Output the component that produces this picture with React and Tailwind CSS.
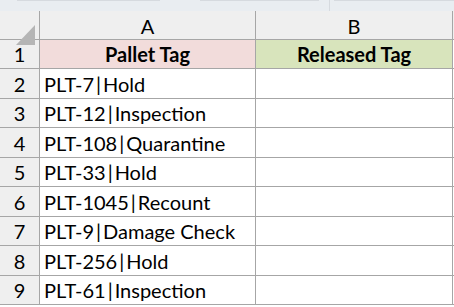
const rows = [
  "PLT-7|Hold",
  "PLT-12|Inspection",
  "PLT-108|Quarantine",
  "PLT-33|Hold",
  "PLT-1045|Recount",
  "PLT-9|Damage Check",
  "PLT-256|Hold",
  "PLT-61|Inspection",
];

const heights = ["h-[30px]", "h-[29px]", "h-[30px]", "h-[29px]", "h-[30px]", "h-[29px]", "h-[30px]", "h-[29px]"];

const Tag = ({ text }) => {
  const [id, status] = text.split("|");
  return (
    <span>
      {id}
      <span className="mx-[2px]">|</span>
      {status}
    </span>
  );
};

const App = () => {
  return (
    <div className="w-[454px] h-[307px] overflow-hidden bg-white text-black font-['Lato',sans-serif] text-[20px] leading-none">
      {/* top strip */}
      <div className="h-[11px] bg-[#e9edf1] flex items-start">
        <div className="w-[17px]" />
        <div className="w-[143px] border-t border-[#d6dadf]" />
        <div className="w-[40px]" />
        <div className="w-[119px] border-t border-[#d6dadf]" />
        <div className="w-[11px] h-[11px] border-r border-[#d6dadf]" />
        <div className="flex-1 ml-[4px] border-t border-[#d6dadf]" />
      </div>

      {/* column headers */}
      <div className="flex h-[29px] bg-[#efefef] border-b border-[#a6a6a6]">
        <div className="w-[40px] border-r border-[#a6a6a6] relative">
          <svg className="absolute left-[16px] top-[14px]" width="19" height="20" viewBox="0 0 19 20">
            <polygon points="19,0 19,20 0,20" fill="#b5b5b5" />
          </svg>
        </div>
        <div className="w-[216px] border-r border-[#a6a6a6] flex items-center justify-center pt-[2px]">A</div>
        <div className="w-[197px] border-r border-[#a6a6a6] flex items-center justify-center pt-[2px]">B</div>
      </div>

      {/* row 1 */}
      <div className="flex h-[29px] border-b border-[#a6a6a6]">
        <div className="w-[40px] bg-[#efefef] border-r border-[#a6a6a6] flex items-center justify-center">1</div>
        <div className="w-[216px] bg-[#f2dcdb] border-r border-[#a6a6a6] flex items-center justify-center font-bold">
          Pallet Tag
        </div>
        <div className="w-[197px] bg-[#d8e4bc] border-r border-[#a6a6a6] flex items-center justify-center font-bold">
          Released Tag
        </div>
      </div>

      {rows.map((text, i) => (
        <div key={text + i} className={`flex ${heights[i]} border-b border-[#a6a6a6]`}>
          <div className="w-[40px] bg-[#efefef] border-r border-[#a6a6a6] flex items-center justify-center">{i + 2}</div>
          <div className="w-[216px] border-r border-[#a6a6a6] flex items-center pl-[4px]">
            <Tag text={text} />
          </div>
          <div className="w-[197px] border-r border-[#a6a6a6]" />
        </div>
      ))}
    </div>
  );
};

export default App;
